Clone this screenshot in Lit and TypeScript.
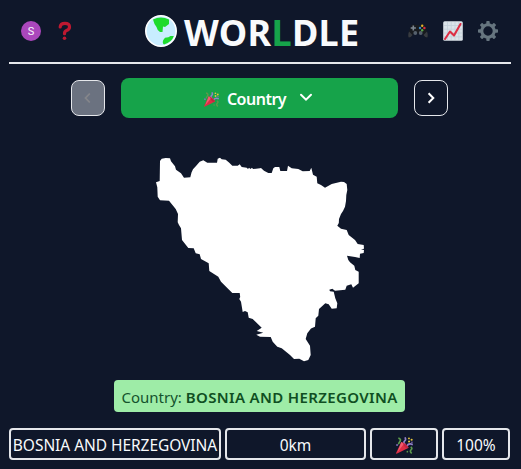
import { LitElement, html, css, svg } from "lit";
import { customElement } from "lit/decorators.js";

const popper = (size: number) => html`<svg width=${size} height=${size} viewBox="0 0 16 16">
  <g fill="none" stroke-width="1.6">
    <path d="M2.2 1Q5 1.8 3.8 4T2 6.5M13.8 9.5Q15.8 10.5 14.2 12T14.8 15.4" stroke="#5c9a4c" />
    <path d="M8.2.4Q9.9 2 8.2 3.6T8.5 7M10.2 8.5Q12 5.5 15.8 7.2" stroke="#9080c8" />
  </g>
  <path d="M5 4.6Q9.5 5.5 12 10.2L0.6 15.8Q-.1 15.8.2 14.8Z" fill="#dd2e44" />
  <path d="M5 4.6 7.4 6.7 1.4 14Z" fill="#f45b70" />
  <path d="M6.5 5.2Q9.5 7 11.6 10.2L9.6 10.5Q7 9 6.5 5.2Z" fill="#c02543" />
  <g fill="#e5c43c"><circle cx="12.2" cy="1.3" r=".9" /><circle cx="14.7" cy="2.6" r="1" /><circle cx="12.3" cy="4.2" r="1" /></g>
  <g fill="#8b6fc0"><circle cx="1" cy="7.6" r=".9" /><circle cx="15" cy="5" r=".7" /></g>
  <circle cx="10.7" cy="13.8" r=".8" fill="#5c9a4c" />
</svg>`;

const outline =
  "M160 161 161.7 158.7 165.7 158 170 158.3 171 161.3 175 166.3 176 169.7 181 173.3 184 177.7 190.3 177.3 191.5 172.5 193 169.3 196 166 199.7 161.7 203.3 160.3 207.3 162.7H217L217.7 158.7 220 157.7 221.7 159.3 225.7 159.7 229 162.5 232.3 165.7H237.7L239.7 164.3 241.7 167 246.7 167.7 248 169 249 167.7 250.5 169 252 167.8 253 169 260 168.3 261 168 264 170.7 268.3 173H271.7L273.3 168.3 275 167 279.3 167 280.3 171H287L288 165.7 291.7 168.3 298.3 169 302.7 171.3 309.7 171 311.3 167.7 313 174.7 316.7 176.7 317.3 183.3 321 185 325 187.7 331.7 184 341 181.7 344 182 346.7 184 347.3 190 346.3 195 346 201 345 206.7 343 211 341 214 339 219 338.8 223 337.3 225.7 341 228.7 346.7 230 348.7 235 355 240 357.7 244 363.7 245 364 248.7 361 249.3 364 250 363.7 253 360 253.7 359.7 258 355 257 347 255.7 348.3 260 350 262.3 354.3 265.7 355.3 270 358.7 271.7V283.3L353 287.7 351.3 284.3 346.7 285.7 345.3 289.7 335 290.7 332.3 288.7 329.3 289.7 330 291.3 333.7 291.7 335.3 298.3 337.3 303.3 336.7 308.3 331.7 308.7 328.7 304.3 325.3 303.3 319 309 318.3 315.7 315.7 318.3 315 326.7 311 328.5 307.3 333.3 305.7 339 310 345.7 310.7 355 308.3 360 304 361.3 299.3 358.7 294 359 290 355 281.7 348.3 277.3 346.7 272.7 341.7 270.7 337 260 336.7 256.3 334.7 263.3 332.7 256.7 331 261.7 327.7 252.7 319 248.7 317.7 247.7 312.3 245 311 242.7 312 241 301.7 239.3 299 240.2 297 239.7 293 232.3 293 221 281.7 218.3 276.7 209.3 271 208.7 263.3 201 259 199.7 254.3 195.7 253.3 193.7 248.3 188.3 248 182 240 181 228.3 179 225 177.7 222.3 178 214 175.7 209 169 200.7 160 200.3 157.7 196.7 157.3 187.3 156 182.3 159.7 181Z";

const gearTeeth = [0, 45, 90, 135, 180, 225, 270, 315];

@customElement("app-root")
export class AppRoot extends LitElement {
  static styles = css`
    :host { display: block; box-sizing: border-box; height: 469px; padding: 0 9px; overflow: hidden; background: #0f172a; color: #f8fafc; font: 16px "Noto Sans", sans-serif; }
    svg { display: block; flex: none; }
    .header { display: flex; align-items: center; box-sizing: border-box; height: 64px; margin-right: 1px; padding: 0 13px 0 12px; border-bottom: 2px solid #e5e7eb; }
    .side { display: flex; align-items: center; flex: none; }
    .left { gap: 17px; width: 124px; }
    .right { justify-content: flex-end; gap: 15px; flex: 1; }
    .avatar { display: grid; place-items: center; width: 20px; height: 20px; border-radius: 50%; background: #ab47bc; font: 11px Roboto, sans-serif; }
    .brand { display: flex; align-items: center; gap: 7px; }
    .title { width: 176px; margin: 4px 0 0; font-size: 36px; line-height: 40px; font-weight: 700; letter-spacing: 0.3px; white-space: nowrap; }
    .accent { color: #16a34a; }
    .modes { display: flex; align-items: center; justify-content: center; gap: 16px; height: 40px; margin: 14px 2px 0 0; }
    .step { display: grid; place-items: center; box-sizing: border-box; width: 34px; height: 36px; padding: 0; border: 1px solid #e5e7eb; border-radius: 8px; background: transparent; color: #fff; }
    .off { background: #6b7280; color: #85868a; }
    .mode { display: flex; align-items: center; justify-content: center; box-sizing: border-box; width: 277px; height: 40px; padding: 2px 2px 0 0; border: 0; border-radius: 8px; background: #16a34a; color: #fff; font: 600 16px "Noto Sans", sans-serif; }
    .mode-name { margin: 0 13px 0 8px; letter-spacing: -0.5px; }
    .chevron { margin-top: -2px; }
    .map { width: 220px; height: 220px; margin: 32px 0 0 141px; }
    .answer { display: flex; justify-content: center; margin: 10px 3px 0 0; }
    .chip { box-sizing: border-box; width: 291px; height: 32px; padding-left: 8px; border-radius: 4px; background: #9eeca7; color: #14532d; font-size: 15px; line-height: 35px; white-space: nowrap; }
    .name { font-weight: 600; letter-spacing: 0.35px; color: #0f4f22; }
    .guess { display: grid; grid-template-columns: 212px 141px 68px 68px; gap: 4px; margin-top: 16px; }
    .cell { display: flex; align-items: center; justify-content: center; box-sizing: border-box; height: 32px; padding-top: 2px; border: 2px solid #e5e7eb; border-radius: 4px; font-size: 15.5px; white-space: nowrap; }
    .country { letter-spacing: -0.05px; }
  `;

  render() {
    return html`
      <header class="header">
        <div class="side left">
          <span class="avatar">S</span>
          <svg width="14" height="20" viewBox="0 0 14 20"><path d="M2.2 6Q2.4 2.3 7 2.3T11.5 6Q11.5 8.5 8.5 9.5Q6.5 10.2 6.5 12.7" fill="none" stroke="#be1931" stroke-width="3.2" stroke-linecap="round" /><circle cx="6.5" cy="17.2" r="1.8" fill="#be1931" /></svg>
        </div>
        <div class="brand">
          <svg width="32" height="32" viewBox="0 0 32 32">
            <circle cx="16" cy="16" r="15.2" fill="#c8edff" stroke="#fff" stroke-width="1.6" />
            <path d="M8 4.5Q16 .5 24 4.6V9L20 12 18 11.5 17.5 17 15 17Q12 15 11.5 12Q9 9 8 4.5Z" fill="#1ddb2c" />
            <path d="M28.8 21Q27 27 19 29.5Q17 28 18.3 25L20 22.7Q24 22.5 25.5 21Z" fill="#1ddb2c" />
          </svg>
          <h1 class="title">WOR<span class="accent">L</span>DLE</h1>
        </div>
        <div class="side right">
          <svg width="20" height="16" viewBox="0 0 20 16">
            <path d="M1 14.5Q-.2 12 1.5 7L3.3 2.5Q5 .8 8 2H12Q15 .8 16.7 2.5L18.5 7Q20.2 12 19 14.5Q16.5 15 14.5 10.5H5.5Q3.5 15 1 14.5Z" fill="#181b1f" />
            <path d="M.7 14.5Q-.3 12 1 8.5L4.5 12Q2.8 14.5.7 14.5ZM19.3 14.5Q20.3 12 19 8.5L15.5 12Q17.2 14.5 19.3 14.5Z" fill="#373b41" />
            <circle cx="7.3" cy="10" r="1.9" fill="#56616d" /><circle cx="12.7" cy="10" r="1.9" fill="#56616d" />
            <path d="M5.3 2.4V7.6M2.7 5H7.9" stroke="#7d8893" stroke-width="1.6" />
            <circle cx="14.2" cy="2.8" r="1.2" fill="#e0b42d" /><circle cx="14.2" cy="7.2" r="1.2" fill="#5aa548" /><circle cx="12" cy="5" r="1.2" fill="#3b88c3" /><circle cx="16.4" cy="5" r="1.2" fill="#d92f40" />
          </svg>
          <svg width="20" height="20" viewBox="0 0 20 20">
            <rect x=".2" y=".2" width="19.6" height="19.6" rx="1.5" fill="#dbe3e9" />
            <path d="M4.5 1V19M8.2 1V19M12 1V19M15.8 1V19M1 4.5H19M1 8.2H19M1 12H19M1 15.8H19" stroke="#c3d0d9" stroke-width=".8" />
            <path d="M2 18 7 10.5 11 14.5 17.5 3" fill="none" stroke="#dd2e44" stroke-width="2.1" stroke-linecap="round" stroke-linejoin="round" />
          </svg>
          <svg width="20" height="20" viewBox="0 0 20 20">
            ${gearTeeth.map((a) => svg`<rect x="8.3" y="0" width="3.4" height="4" rx=".8" fill="#66757f" transform="rotate(${a} 10 10)" />`)}
            <circle cx="10" cy="10" r="6.2" fill="none" stroke="#66757f" stroke-width="3" />
          </svg>
        </div>
      </header>
      <nav class="modes">
        <button class="step off"><svg width="8" height="12" viewBox="0 0 8 12"><path d="M5.8 1.5 1.5 6 5.8 10.5" fill="none" stroke="currentColor" stroke-width="1.8" /></svg></button>
        <button class="mode">
          ${popper(15)}<span class="mode-name">Country</span>
          <svg class="chevron" width="14" height="10" viewBox="0 0 14 10"><path d="M2 1.7 7 6.7 12 1.7" fill="none" stroke="#fff" stroke-width="2" stroke-linecap="round" /></svg>
        </button>
        <button class="step"><svg width="8" height="12" viewBox="0 0 8 12"><path d="M1.6 1.2 6.3 6 1.6 10.8" fill="none" stroke="currentColor" stroke-width="2" /></svg></button>
      </nav>
      <svg class="map" viewBox="150 150 220 220"><path d=${outline} fill="#fff" /></svg>
      <div class="answer"><div class="chip">Country: <span class="name">BOSNIA AND HERZEGOVINA</span></div></div>
      <div class="guess">
        <div class="cell country">BOSNIA AND HERZEGOVINA</div>
        <div class="cell">0km</div>
        <div class="cell">${popper(17)}</div>
        <div class="cell">100%</div>
      </div>
    `;
  }
}
